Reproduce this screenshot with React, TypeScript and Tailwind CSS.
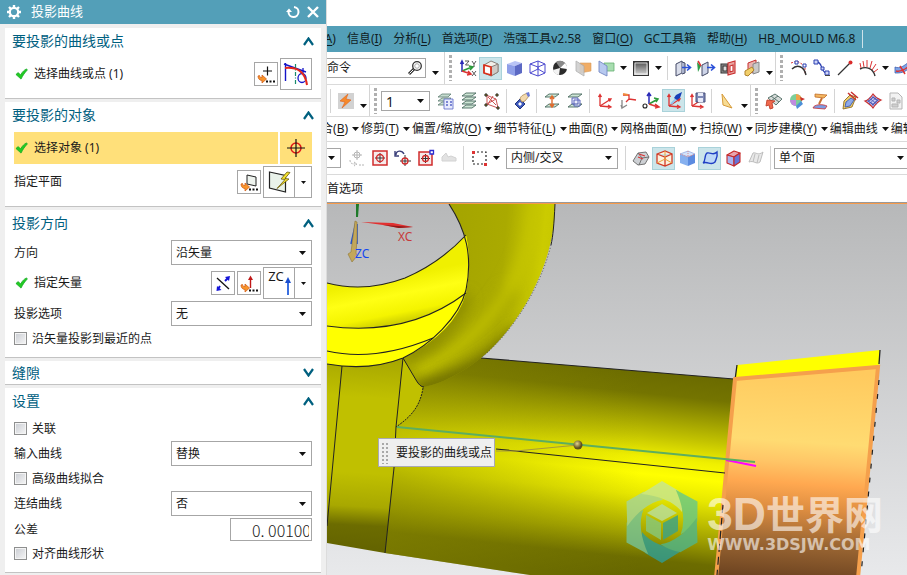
import type { ReactNode } from "react";
import clsx from "clsx";

const axes = (
  <g strokeWidth="1.3" fill="none">
    <path d="M5 15V4M3.500 6L5 3.500 6.500 6" stroke="#d33" />
    <path d="M5 15L16 8M13 8h3l-1.500 2.500" stroke="#d33" />
    <path d="M5 15l11 1M13 14l3 2-3 1.500" stroke="#d33" />
  </g>
);

const cubeLines = "M3 6l8-3 7 3v9l-7 3-8-3zM3 6l8 3 7-3M11 9v9";

// 20x20 drawings used by the toolbars
const icons: Record<string, ReactNode> = {
  csys: (
    <g fill="none" strokeWidth="1.5">
      <path d="M4 14V4M2.500 6L4 3l1.500 3" stroke="#2a2ab8" />
      <path d="M4 13l10-4M11 8l4 1-3 3" stroke="#2a9a3a" />
      <path d="M4 13l9 3M10 13l3 3-4 1" stroke="#d33" />
      <path d="M7 3h4L7.500 7H11M14 3l2 3 2-3M16 6v3M14 13l4 5M18 13l-4 5" stroke="#444" strokeWidth=".9" />
    </g>
  ),
  shadedEdges: (
    <g strokeLinejoin="round">
      <path d="M3 7l7-4 7 3v8l-7 4-7-3z" fill="#f2efe9" stroke="#8b827b" />
      <path d="M10 9l7-3v8l-7 4z" fill="#cfcac5" stroke="#8b827b" />
      <path d="M3 7l7 2v8l-7-2z" fill="#fff" stroke="#d9301c" strokeWidth="1.800" />
    </g>
  ),
  shaded: (
    <g>
      <path d="M3 6l8-3 7 2-7 3z" fill="#b9c4f6" />
      <path d="M3 6l8 2v10l-8-3z" fill="#8f9fe8" />
      <path d="M11 8l7-3v10l-7 3z" fill="#5c69c4" />
    </g>
  ),
  wire: (
    <g fill="none" stroke="#4b48cf" strokeWidth="1">
      <path d={cubeLines} />
      <path d="M11 3v8l7 4M11 11l-8 4" />
    </g>
  ),
  studio: (
    <g>
      <circle cx="10" cy="10" r="7" fill="#2c2c2c" />
      <path d="M10 10L6 4a7 7 0 0 1 9 1z" fill="#8a8a8a" />
      <path d="M10 10l-7 2a7 7 0 0 0 6 5z" fill="#f3f3f3" />
      <path d="M10 10l5-5a7 7 0 0 1 2 6z" fill="#fff" />
    </g>
  ),
  clip: (
    <g>
      <path d="M7 5h11v8l-11 2z" fill="#f0ad66" stroke="#d99b5c" strokeWidth=".6" />
      <path d="M3 3l8 5v10L3 13z" fill="#cfcfcf" stroke="#a8a8a8" strokeWidth=".8" opacity=".9" />
    </g>
  ),
  clipEdit: (
    <g>
      <path d="M8 5h10v8H9z" fill="#a8ddb0" stroke="#64b071" strokeWidth=".8" />
      <path d="M3 3l8 5v10L3 14z" fill="#b7c9ef" stroke="#7588c4" strokeWidth=".9" />
    </g>
  ),
  backdrop: (
    <g>
      <defs>
        <linearGradient id="backdrop" x1="0" y1="0" x2="0" y2="1">
          <stop stopColor="#4a4a4a" />
          <stop offset="1" stopColor="#dcdcdc" />
        </linearGradient>
      </defs>
      <rect x="2.500" y="3.500" width="15" height="14" fill="url(#backdrop)" stroke="#333" />
      <path d="M4 5h12v11H4z" fill="none" stroke="#fff" strokeWidth=".7" />
    </g>
  ),
  moveFace: (
    <g>
      <path d="M3 6l6-3v12l-6 3z" fill="#d9ddea" stroke="#444a66" />
      <path d="M9 4l3 1v10l-3 1" fill="#aab2cc" stroke="#444a66" />
      <path d="M9 9.500h8M14 6.500l3.500 3-3.500 3" fill="none" stroke="#2a50d8" strokeWidth="1.600" />
    </g>
  ),
  pullFace: (
    <g>
      <path d="M1 4l4 4-3 6z" fill="#2e9e49" />
      <path d="M2 3l3 5" stroke="#d33" strokeWidth="1.500" />
      <path d="M6 7l6-3v11l-6 3z" fill="#cdd4e8" stroke="#444a66" />
      <path d="M11 9.500h7M15 6.500l3.500 3-3.500 3" fill="none" stroke="#2a50d8" strokeWidth="1.600" />
    </g>
  ),
  offsetFace: (
    <g strokeWidth="1.100">
      <path d="M2 6h7v9H2z" fill="#999" stroke="#333" />
      <path d="M4 8h4v5H4z" fill="#ddd" stroke="#333" />
      <path d="M9 5l7-2v12l-7 2z" fill="#e9a4a0" stroke="#c92f2f" />
      <path d="M11 8l3-1v6l-3 1z" fill="#fff" stroke="#c92f2f" />
    </g>
  ),
  replaceFace: (
    <g strokeWidth="1">
      <path d="M6 5l8-3v11l-8 3z" fill="#e8b3ae" stroke="#c92f2f" />
      <path d="M11 6l6-2v10l-6 2z" fill="#c9c9c9" stroke="#888" />
      <path d="M3 13l7-4 2 3-6 6-3-1z" fill="#f2cf6a" stroke="#b0832c" />
    </g>
  ),
  spline: (
    <g fill="none">
      <path d="M2 5l6-2 8 5v8" stroke="#d33" strokeDasharray="2 1.500" />
      <path d="M3 11c5-5 12-3 14 6" stroke="#333" strokeWidth="1.400" />
      <path d="M6 3h3v3H6zM14 6h3v3h-3z" fill="#fff" stroke="#2a3fb0" />
    </g>
  ),
  bridge: (
    <g fill="none" stroke="#2a3fb0">
      <path d="M5 4c6 0 3 11 11 12" strokeWidth="1.300" />
      <path d="M2 2h4v4H2zM9 9h3v3H9zM13 13h4v4h-4z" fill="#cfd6f8" />
      <path d="M13 17.500h5" stroke="#444" />
    </g>
  ),
  line: (
    <g>
      <path d="M3 17L15 5" stroke="#333" strokeWidth="1.200" />
      <circle cx="15.500" cy="4.500" r="2" fill="#d92c2c" />
    </g>
  ),
  comb: (
    <g fill="none">
      <path d="M2 11c6-3 13-1 15 7" stroke="#333" strokeWidth="1.400" />
      <path d="M3 10L2 5M6 9L5 3M9 9V2M12 10l2-7M14 12l4-6M16 14l4-3" stroke="#d33" />
    </g>
  ),
  sheet: (
    <g>
      <path d="M2 9c5 2 9-1 15-6v6c-5 6-10 6-15 6z" fill="#7da3e8" stroke="#3f5fb0" strokeWidth=".8" />
      <path d="M3 13c5 1 9-1 14-6M7 8l5 8" stroke="#d33" fill="none" strokeWidth="1.500" />
    </g>
  ),
  bolt: (
    <g>
      <path d="M2 2h16v16H2z" fill="#d2d2d2" />
      <path d="M12 3L4 10l5 1-3 6 9-8-5-1z" fill="#f58a2c" stroke="#e0601a" strokeWidth=".6" />
    </g>
  ),
  layerSettings: (
    <g fill="#c6dccf" stroke="#5f7f74" strokeWidth=".8">
      <path d="M2 14l4-3h9l-3 3zM2 10l4-3h9l-3 3zM2 6l4-3h9l-3 3z" />
      <path d="M8 8h9v10H8z" fill="#e7ebfc" stroke="#5a67c8" />
      <path d="M10 11h2M10 14h2M14 11h2M14 14h2" stroke="#5a67c8" strokeWidth="1.500" />
    </g>
  ),
  layers: (
    <g fill="#cfe6d6" stroke="#4b6b60" strokeWidth=".9">
      <path d="M3 17l4-3h10l-4 3zM3 13l4-3h10l-4 3zM3 9l4-3h10l-4 3zM3 5l4-3h10l-4 3z" />
    </g>
  ),
  layerMove: (
    <g fill="none" strokeWidth="1">
      <path d="M4 4l10 4 2 9M5 13L14 8M5 4v9l11 4" stroke="#c55" />
      <path d="M6 6l8 8M11 5l-5 8" stroke="#c55" />
      <path d="M3 3h2v2H3zM14 3h2v2h-2zM15 16h2v2h-2zM3 13h2v2H3z" fill="#e2c32c" stroke="#222" />
    </g>
  ),
  pickLayer: (
    <g>
      <path d="M3 13l5-5 5 5-5 5z" fill="#3d59bd" stroke="#22367d" />
      <path d="M6 13l2-2 2 2-2 2z" fill="#fff" />
      <path d="M8 8c1-4 4-4 7-6l2 3-4 5-3 1z" fill="#f3d9ac" stroke="#a88650" strokeWidth=".8" />
      <path d="M14 2l3-1 1 4-2 1z" fill="#6a7bd8" />
    </g>
  ),
  planes: (
    <g fill="#cfe6d6" stroke="#4b6b60" strokeWidth=".9">
      <path d="M3 6l4-3h10l-4 3zM3 16l4-3h10l-4 3z" />
      <path d="M10 6v9M8 8l2-3 2 3M8 13l2 3 2-3" stroke="#e06a2c" fill="none" strokeWidth="1.400" />
    </g>
  ),
  planesBox: (
    <g fill="#cfe6d6" stroke="#4b6b60" strokeWidth=".9">
      <path d="M3 6l4-3h10l-4 3zM3 16l4-3h10l-4 3z" />
      <path d="M7 7h6v6H7zM9 9h6v6H9z" fill="#e3e6fa" fillOpacity=".7" stroke="#4e59b5" />
    </g>
  ),
  wcs: axes,
  wcsOrient: (
    <g fill="none" strokeWidth="1.300">
      <path d="M4 9v8l5-3M4 17l-1-3" stroke="#888" />
      <path d="M5 4h6v4M11 8l7 1M11 8l-3 3" stroke="#d33" />
      <path d="M5 3l5 1" stroke="#f08a3c" strokeWidth="2" />
    </g>
  ),
  wcsOrigin: (
    <g fill="none" strokeWidth="1.500">
      <path d="M8 13V3M6 5l2-3 2 3" stroke="#2a2ab8" />
      <path d="M8 13l9-5M13 7l4 1-2 3" stroke="#2a9a3a" />
      <path d="M8 13l9 3M14 13l4 3-4 1" stroke="#d33" />
      <circle cx="4" cy="15" r="2" stroke="#222" strokeWidth="1.100" />
    </g>
  ),
  wcsDynamic: (
    <g>
      {axes}
      <path d="M7 13L14 6" stroke="#8fc4ee" strokeWidth="1.800" />
      <path d="M10 7l2-3 6-3-2 6-3 2z" fill="#1840b8" />
    </g>
  ),
  wcsSave: (
    <g>
      {axes}
      <path d="M9 2h9v9H9z" fill="#7d88b5" stroke="#48507a" />
      <path d="M11 2h5v3h-5zM11 7h5v4h-5z" fill="#e8ebf8" />
    </g>
  ),
  triangle: <path d="M5 3l10 14-9-3z" fill="#f7dc94" stroke="#d69b3a" />,
  patch: (
    <g strokeWidth=".9">
      <path d="M4 7l7-4 7 5-6 6z" fill="#d6dbd9" stroke="#4f6b63" />
      <path d="M7 5l8 6M14 5l-7 5" stroke="#4f6b63" />
      <path d="M3 9l8 1-3 2 1 5-3 1-1-4-3 1z" fill="#f06a4e" stroke="#c2402a" />
    </g>
  ),
  palette: (
    <g>
      <circle cx="9" cy="9" r="6" fill="#7ccf9a" />
      <path d="M9 3a6 6 0 0 1 6 6H9z" fill="#f0a24a" />
      <path d="M3 9h6v6a6 6 0 0 1-6-6z" fill="#c08be0" />
      <path d="M9 15l5-5 2 3-6 5z" fill="#4d8fd9" />
      <path d="M13 6l5 2-4 2z" fill="#c9302c" />
    </g>
  ),
  sweep: (
    <g>
      <path d="M5 3l12 1-3 3-9-1z" fill="#f3b661" stroke="#c06c26" strokeWidth=".8" />
      <path d="M12 7L9 13" stroke="#c96f2f" strokeWidth="2" />
      <path d="M3 17c1-4 10-4 14-2l-2 3z" fill="#7b9ce4" stroke="#c92f2f" strokeWidth=".8" />
    </g>
  ),
  bladeSheet: (
    <g strokeWidth=".9">
      <path d="M4 10l6-6 6 2-4 10-9 2z" fill="#f2cf6a" stroke="#8f6d24" />
      <path d="M6 11l5-4 3 2-4 6-5 1z" fill="#8fa9e8" stroke="#3f5fb0" />
      <path d="M8 2l8 7M11 1l7 6" stroke="#c92f2f" strokeWidth="1.500" />
    </g>
  ),
  mesh: (
    <g fill="none" stroke="#c92f2f" strokeWidth="1.200">
      <path d="M2 10c4-1 6-4 8-7 2 3 5 5 8 6-4 2-6 5-8 8-2-3-5-5-8-7z" fill="#cdd1f6" />
      <path d="M5 10c3-1 4-2 5-4 2 2 3 3 5 3-2 2-4 3-5 5-1-2-3-3-5-4z" stroke="#4e59b5" />
      <path d="M6 7l8 6M14 6l-8 7" stroke="#4e59b5" strokeWidth=".8" />
    </g>
  ),
  report: (
    <g fill="#f2f2f2" stroke="#b5b5b5">
      <path d="M4 2h8l4 4v12H4z" />
      <path d="M6 7h3v3H6zM11 9h3v3h-3zM6 13h6v3H6z" fill="#cfcfcf" />
    </g>
  ),
  snapOff: (
    <g stroke="#b4b4b4" fill="none">
      <path d="M10 2v10M5 7h10" />
      <circle cx="10" cy="7" r="3" />
      <path d="M3 12c0 4 3 4 6 4M7 14l3 2-3 2M12 17h6" strokeDasharray="2 1" />
    </g>
  ),
  target: (
    <g fill="none">
      <path d="M3 3h14v14H3z" fill="#f6eaea" stroke="#d12c2c" strokeWidth="1.500" />
      <path d="M10 5v10M5 10h10" stroke="#333" />
      <circle cx="10" cy="10" r="3.500" stroke="#d12c2c" strokeWidth="1.300" />
    </g>
  ),
  rotateTarget: (
    <g fill="none">
      <path d="M3 7c0-5 6-5 8-1M2 3v5h4" stroke="#3a3f7a" strokeWidth="1.400" />
      <path d="M12 7v11M7 13h11" stroke="#333" />
      <circle cx="12" cy="13" r="3" stroke="#d12c2c" strokeWidth="1.300" />
    </g>
  ),
  targetBox: (
    <g fill="none">
      <path d="M3 4h13v13H3z" fill="#f6eaea" stroke="#d12c2c" strokeWidth="1.500" />
      <path d="M9.500 6v9M5 10.500h9" stroke="#333" />
      <circle cx="9.500" cy="10.500" r="3" stroke="#d12c2c" strokeWidth="1.300" />
      <path d="M14 2.500h3.500V6H14z" fill="#fff" stroke="#2a2ad0" strokeWidth="1.300" />
    </g>
  ),
  cloud: <path d="M3 9l4-4 2 4 3-1 5 2v3H3z" fill="#e2e2e2" stroke="#d2d2d2" />,
  marquee: (
    <g fill="none">
      <path d="M4 4h13v12H4z" stroke="#222" strokeWidth="1.200" strokeDasharray="2 2" />
      <path d="M3 3h3v3H3zM15 15h3v3h-3z" fill="#d33" />
    </g>
  ),
  bodyGrey: (
    <g stroke="#666" strokeWidth=".9">
      <path d="M2 13l5-8 8-1 3 5-4 7-7 1z" fill="#cdd0d4" />
      <path d="M7 5l4 5-3 7M11 10l7-1" fill="none" />
      <path d="M8 6l6 2M7 9l5 2" stroke="#d33" strokeWidth="1.200" />
    </g>
  ),
  bodyEdges: (
    <g fill="none">
      <path d={cubeLines} fill="#fbf1df" stroke="#d23a24" strokeWidth="1.300" />
      <path d="M11 3v8l7 4M11 11l-8 4" stroke="#e9a23c" />
    </g>
  ),
  bodyBlue: (
    <g>
      <path d="M3 6l8-3 7 3-7 3z" fill="#d5e3fa" stroke="#8aa5df" strokeWidth=".7" />
      <path d="M3 6l8 3v9l-8-3z" fill="#86b0ef" />
      <path d="M11 9l7-3v9l-7 3z" fill="#5b8be0" />
      <path d="M11 3v6M3 6l8 3 7-3" stroke="#d88" fill="none" strokeDasharray="1 1" />
    </g>
  ),
  surface: (
    <path d="M3 15c3-2 1-8 4-10 4-1 6 3 10-1 1 5-1 7-2 10-4 4-7-1-12 1z" fill="#bcd8f8" stroke="#1f3fc4" strokeWidth="1.400" />
  ),
  bodyRed: (
    <g stroke="#c62828" strokeWidth="1.100" strokeLinejoin="round">
      <path d="M4 7l7-4 6 2-6 4z" fill="#e8a5ae" />
      <path d="M4 7l7 2v9l-7-3z" fill="#a9b4f0" />
      <path d="M11 9l6-4v9l-6 4z" fill="#6674d8" />
    </g>
  ),
  surfaceGrey: <path d="M3 14l4-9c3-1 5 3 10-1l-3 10c-4 3-6-2-11 0zM9 6l-2 8M13 7l-2 8" fill="#e8e8e8" stroke="#bdbdbd" />,
};

const Caret = () => (
  <svg viewBox="0 0 7 4" className="h-1 w-[7px] shrink-0">
    <path d="M0 0h7L3.500 4z" fill="#111" />
  </svg>
);

const Tool = ({ name, active }: { name: string; active?: boolean }) => (
  <button
    type="button"
    aria-label={name}
    className={clsx("flex h-[23px] w-[23px] shrink-0 items-center justify-center border", active ? "border-[#a9d2da] bg-[#cbe5ea]" : "border-transparent")}
  >
    <svg viewBox="0 0 20 20" className="size-5 shrink-0">{icons[name]}</svg>
  </button>
);

const Tools = ({ names, active = [] }: { names: string[]; active?: string[] }) => (
  <>
    {names.map((name) => (
      <Tool key={name} name={name} active={active.includes(name)} />
    ))}
  </>
);

const More = ({ low }: { low?: boolean }) => (
  <button type="button" aria-label="more" className={clsx("flex h-full w-3 shrink-0 items-center justify-center", low && "pt-2.5")}>
    <Caret />
  </button>
);

const Divider = () => <div className="mx-[3px] h-6 w-px shrink-0 bg-[#d4d4d4]" />;

const Grip = () => (
  <div className="flex h-full shrink-0 items-center border-l border-[#d4d4d4] px-1">
    <div className="h-[26px] w-[3px] bg-[repeating-linear-gradient(to_bottom,#b0b0b0_0_3px,#fff_3px_5px)]" />
  </div>
);

const Dropdown = ({ label, value, className }: { label: string; value: string; className?: string }) => (
  <div className={clsx("relative shrink-0 border border-[#a6a6a6] bg-white", className)}>
    <select aria-label={label} defaultValue={value} className="h-full w-full appearance-none bg-transparent pl-1 outline-none">
      <option>{value}</option>
    </select>
    <div className="pointer-events-none absolute inset-y-0 right-[5px] flex items-center">
      <Caret />
    </div>
  </div>
);

const Row = ({ children, className }: { children: ReactNode; className?: string }) => (
  <div className={clsx("flex shrink-0 items-center overflow-hidden border-b border-[#dadada] whitespace-nowrap", className)}>{children}</div>
);

const MenuLabel = ({ text, hotkey }: { text: string; hotkey?: string }) => (
  <>
    {text}
    {hotkey && (
      <>
        (<u className="underline-offset-2">{hotkey}</u>)
      </>
    )}
  </>
);

const menus = [
  { text: "", hotkey: "A" },
  { text: "信息", hotkey: "I" },
  { text: "分析", hotkey: "L" },
  { text: "首选项", hotkey: "P" },
  { text: "浩强工具v2.58" },
  { text: "窗口", hotkey: "O" },
  { text: "GC工具箱" },
  { text: "帮助", hotkey: "H" },
  { text: "HB_MOULD M6.8" },
];

const commands = [
  { text: "合", hotkey: "B" },
  { text: "修剪", hotkey: "T" },
  { text: "偏置/缩放", hotkey: "O" },
  { text: "细节特征", hotkey: "L" },
  { text: "曲面", hotkey: "R" },
  { text: "网格曲面", hotkey: "M" },
  { text: "扫掠", hotkey: "W" },
  { text: "同步建模", hotkey: "Y" },
  { text: "编辑曲线" },
  { text: "编辑曲面" },
];

const Section = ({ title, children }: { title: string; children?: ReactNode }) => (
  <section className="mb-[3px] border-b border-[#c3c3c3] bg-white last:mb-0">
    <button type="button" className={clsx("flex w-full items-center justify-between px-[7px] text-sm text-[#00607f]", children ? "h-[26px]" : "h-[23px]")}>
      {title}
      <svg viewBox="0 0 11 9" className="h-[9px] w-[11px]">
        <path d={children ? "M1 8l4.500-6.500L10 8" : "M1 1l4.500 6.500L10 1"} fill="none" stroke="#00607f" strokeWidth="2.200" />
      </svg>
    </button>
    {children && <div className="flex flex-col gap-0.5 px-[9px] pt-1 pb-2">{children}</div>}
  </section>
);

const Tick = () => (
  <svg viewBox="0 0 14 12" className="mr-1.5 ml-px h-3 w-[13px]">
    <path d="M1 6.500L3.500 4.500 6 7C8 3.500 10 1.500 12.500.5l.8 1.200C10.500 4.500 8.500 7.500 6.500 11.500z" fill="#22cc22" stroke="#12a622" strokeWidth=".8" />
  </svg>
);

const Square = ({ label, small, children }: { label: string; small?: boolean; children: ReactNode }) => (
  <button type="button" aria-label={label} className={clsx("flex shrink-0 items-center justify-center border border-[#a6a6a6] bg-white", small ? "size-6" : "size-8")}>
    {children}
  </button>
);

const SplitSquare = ({ label, children }: { label: string; children: ReactNode }) => (
  <div className="flex">
    <Square label={label}>{children}</Square>
    <button type="button" aria-label={`${label} ▾`} className="-ml-px flex h-8 w-[18px] items-center justify-center border border-[#a6a6a6]">
      <svg viewBox="0 0 5 3" className="h-[3px] w-[5px]">
        <path d="M0 0h5L2.500 3z" fill="#111" />
      </svg>
    </button>
  </div>
);

const Field = ({ label, value }: { label: string; value: string }) => (
  <div className="flex items-center justify-between">
    <span>{label}</span>
    <Dropdown label={label} value={value} className="h-[25px] w-[141px]" />
  </div>
);

const Check = ({ label }: { label: string }) => (
  <label className="flex h-[21px] items-center gap-[5px]">
    <input
      type="checkbox"
      className="size-[13px] appearance-none border border-[#8e8f8f] bg-linear-to-br from-[#c9ccd2] to-[#f6f6f6] shadow-[inset_0_0_0_1px_#f4f4f4] checked:bg-[#3a8fb0]"
    />
    {label}
  </label>
);

const BentArrow = () => (
  <path d="M3 13c0 3 2 4.500 4 4.500v2.500l4.500-4L7 12v2.500c-1.500 0-2.500-.5-2.500-2z" fill="#f7942a" stroke="#d4611a" strokeWidth=".8" />
);

const Dots = () => <path d="M11 17.500h2v2h-2zM14.500 17.500h2v2h-2zM18 17.500h2v2h-2z" fill="#111" />;

const DialogPanel = () => (
  <aside className="flex w-[327px] shrink-0 flex-col border-r border-[#dcdcdc] bg-[#efefef]">
    <header className="flex h-6 items-center bg-[#539fb8] px-1.5 text-[13px] text-white">
      <svg viewBox="0 0 16 16" className="mr-[9px] size-4">
        <circle cx="8" cy="8" r="4.200" fill="none" stroke="#fff" strokeWidth="2.200" />
        <path d="M8 1v2.500M8 12.500V15M1 8h2.500M12.500 8H15M3 3l2 2M11 11l2 2M13 3l-2 2M5 11l-2 2" stroke="#fff" strokeWidth="2.400" />
      </svg>
      <h1 className="grow">投影曲线</h1>
      <button type="button" aria-label="重置" className="mr-1.5">
        <svg viewBox="0 0 14 14" className="size-3.5">
          <path d="M8 2a5 5 0 1 1-5.500 5" fill="none" stroke="#fff" strokeWidth="2" />
          <path d="M0 7l3-3.500L6 7z" fill="#fff" />
        </svg>
      </button>
      <button type="button" aria-label="关闭">
        <svg viewBox="0 0 14 14" className="size-3.5">
          <path d="M2 2l10 10M12 2L2 12" stroke="#fff" strokeWidth="2.400" />
        </svg>
      </button>
    </header>

    <div className="grow px-[5px] pt-1">
      <Section title="要投影的曲线或点">
        <div className="flex items-center">
          <Tick />
          <span className="grow">选择曲线或点 (1)</span>
          <div className="flex items-center gap-0.5">
            <Square small label="点">
              <svg viewBox="0 0 22 22" className="size-[22px]">
                <path d="M12.500 3.500v9M8 8h9" stroke="#111" strokeWidth="1.200" />
                <BentArrow />
                <Dots />
              </svg>
            </Square>
            <Square label="曲线">
              <svg viewBox="0 0 30 30" className="size-[30px]" fill="none">
                <path d="M4.500 4v18M3 5l22 8" stroke="#1414c8" strokeWidth="1.400" />
                <path d="M14.500 5v21" stroke="#188a6a" strokeWidth="1.200" strokeDasharray="4 1.500 1 1.500" />
                <ellipse cx="21" cy="19" rx="4" ry="4.500" stroke="#1414c8" strokeWidth="1.300" />
                <path d="M22 9v5" stroke="#1414c8" strokeWidth="1.300" />
                <path d="M4 9c12-1 20 3 22 17" stroke="#e3261a" strokeWidth="2" />
              </svg>
            </Square>
          </div>
        </div>
      </Section>

      <Section title="要投影的对象">
        <div className="flex h-8 gap-0.5">
          <div className="flex grow items-center bg-[#ffe07a]">
            <Tick />
            选择对象 (1)
          </div>
          <button type="button" aria-label="选择对象" className="flex w-8 items-center justify-center bg-[#ffe07a]">
            <svg viewBox="0 0 20 20" className="size-5" fill="none">
              <circle cx="10" cy="10" r="5" stroke="#e01818" strokeWidth="1.500" />
              <path d="M10 1v18M1 10h18" stroke="#111" strokeWidth="1.200" />
            </svg>
          </button>
        </div>
        <div className="flex items-center">
          <span className="grow">指定平面</span>
          <div className="flex items-center gap-0.5">
            <Square small label="平面对话框">
              <svg viewBox="0 0 22 22" className="size-[22px]">
                <path d="M9 4l9 2v9l-9-2z" fill="#eef3ee" stroke="#222" />
                <BentArrow />
                <Dots />
              </svg>
            </Square>
            <SplitSquare label="指定平面">
              <svg viewBox="0 0 30 30" className="size-[30px]">
                <path d="M5.500 5l16 3.500V25l-16-4z" fill="#e9f2ea" stroke="#222" strokeWidth="1.200" />
                <path d="M23 5l-6 7 4 .5-8 9 12-9.500-4-.5 5-6z" fill="#f5e22c" stroke="#6b5c10" strokeWidth=".8" />
              </svg>
            </SplitSquare>
          </div>
        </div>
      </Section>

      <Section title="投影方向">
        <Field label="方向" value="沿矢量" />
        <div className="flex items-center">
          <Tick />
          <span className="grow">指定矢量</span>
          <div className="flex items-center gap-0.5">
            <Square small label="反向">
              <svg viewBox="0 0 22 22" className="size-[22px]">
                <path d="M5 6l12 11" stroke="#111" strokeWidth="1.300" />
                <path d="M13 9l3-3M8 14l-2 3" stroke="#1414d8" strokeWidth="2" />
                <path d="M13 5l5-1-1 5zM5 14l-.500 5L9.500 18z" fill="#1414d8" />
              </svg>
            </Square>
            <Square small label="矢量对话框">
              <svg viewBox="0 0 22 22" className="size-[22px]">
                <path d="M12.500 16V7" stroke="#c01818" strokeWidth="1.400" />
                <path d="M10 8l2.500-4.500L15 8z" fill="#c01818" />
                <BentArrow />
                <Dots />
              </svg>
            </Square>
            <SplitSquare label="指定矢量">
              <span className="self-start pt-0.5 pl-0.5 text-[13px] leading-3">ZC</span>
              <svg viewBox="0 0 8 22" className="mt-1.5 h-[22px] w-2 shrink-0">
                <path d="M4 20V6" stroke="#3a6fe0" strokeWidth="2" />
                <path d="M1 8l3-6 3 6z" fill="#1a4fd0" />
              </svg>
            </SplitSquare>
          </div>
        </div>
        <Field label="投影选项" value="无" />
        <Check label="沿矢量投影到最近的点" />
      </Section>

      <Section title="缝隙" />

      <Section title="设置">
        <Check label="关联" />
        <Field label="输入曲线" value="替换" />
        <Check label="高级曲线拟合" />
        <Field label="连结曲线" value="否" />
        <label className="flex items-center justify-between">
          公差
          <input
            type="text"
            defaultValue="0. 00100"
            className="h-[23px] w-[82px] border border-[#a6a6a6] bg-white pr-0.5 pl-[21px] font-['Noto_Sans_CJK_SC',sans-serif] text-base font-light outline-none"
          />
        </label>
        <Check label="对齐曲线形状" />
      </Section>
    </div>
  </aside>
);

const Toolbars = () => (
  <>
    <nav className="flex h-[26px] shrink-0 items-center gap-[11px] overflow-hidden bg-[#539fb8] whitespace-nowrap text-[#101c22]">
      {menus.map((menu, index) => (
        <button key={menu.text} type="button" className={clsx("shrink-0", index === 0 && "-ml-1.5")}>
          <MenuLabel {...menu} />
        </button>
      ))}
      <div className="-ml-1 h-[18px] w-px shrink-0 bg-[#cfe3ea]" />
    </nav>

    <Row className="h-[33px]">
      <div className="flex h-5 w-[99px] shrink-0 items-center border border-l-0 border-[#a6a6a6]">
        <input type="text" aria-label="查找命令" defaultValue="命令" className="w-0 grow outline-none" />
        <svg viewBox="0 0 16 16" className="mr-0.5 size-4" fill="none">
          <path d="M7 9l-5 5" stroke="#333" strokeWidth="3" />
          <path d="M6.500 9.500L2.500 13.500" stroke="#fff" />
          <circle cx="10" cy="6" r="4.300" fill="#fff" stroke="#333" strokeWidth="1.300" />
          <circle cx="10" cy="6" r="2.300" stroke="#999" strokeWidth=".8" />
        </svg>
      </div>
      <div className="flex h-full w-[18px] shrink-0 justify-center">
        <More low />
      </div>
      <Grip />
      <Tools names={["csys", "shadedEdges", "shaded", "wire", "studio", "clip", "clipEdit"]} active={["shadedEdges"]} />
      <More />
      <Tool name="backdrop" />
      <More />
      <Divider />
      <Tools names={["moveFace", "pullFace", "offsetFace", "replaceFace"]} />
      <More low />
      <Grip />
      <Tools names={["spline", "bridge", "line", "comb"]} />
      <More />
      <Tool name="sheet" />
    </Row>

    <Row className="h-8">
      <Divider />
      <Tool name="bolt" />
      <More low />
      <Grip />
      <Dropdown label="工作图层" value="1" className="mr-1 h-5 w-[49px] text-sm" />
      <Tools names={["layerSettings", "layers", "layerMove"]} />
      <Divider />
      <Tool name="pickLayer" />
      <Divider />
      <Tools names={["planes", "planesBox"]} />
      <Divider />
      <Tools names={["wcs", "wcsOrient", "wcsOrigin", "wcsDynamic", "wcsSave"]} active={["wcsDynamic"]} />
      <Divider />
      <Tool name="triangle" />
      <More low />
      <Grip />
      <Tools names={["patch", "palette", "sweep"]} />
      <Divider />
      <Tools names={["bladeSheet", "mesh", "report"]} />
      <More low />
    </Row>

    <Row className="h-[25px] gap-0.5">
      {commands.map((command, index) => (
        <button key={command.text} type="button" className={clsx("flex shrink-0 items-center gap-1", index === 0 && "-ml-1.5")}>
          <span>
            <MenuLabel {...command} />
          </span>
          <Caret />
        </button>
      ))}
    </Row>

    <Row className="h-[33px]">
      <Dropdown label="过滤器" value="" className="mr-1 h-5 w-3.5 border-l-0" />
      <Tools names={["snapOff", "target", "rotateTarget", "targetBox", "cloud"]} />
      <Divider />
      <Tool name="marquee" />
      <More />
      <Dropdown label="选择方式" value="内侧/交叉" className="mx-1 h-[21px] w-28" />
      <Divider />
      <Tools names={["bodyGrey", "bodyEdges", "bodyBlue", "surface", "bodyRed", "surfaceGrey"]} active={["bodyEdges", "surface"]} />
      <Divider />
      <Dropdown label="面规则" value="单个面" className="h-[21px] w-[136px]" />
    </Row>

    <div className="flex h-7 shrink-0 items-center border-b border-[#999]">首选项</div>
  </>
);

const Scene = () => (
  <svg viewBox="327 204 580 371" preserveAspectRatio="xMinYMin slice" className="absolute inset-0 h-full w-full">
    <defs>
      <linearGradient id="sky" x1="0" y1="0" x2="0" y2="1">
        <stop stopColor="#b7b8b9" />
        <stop offset="1" stopColor="#e8e9eb" />
      </linearGradient>
      <linearGradient id="pipe" gradientUnits="userSpaceOnUse" x1="620" y1="365" x2="598" y2="575">
        <stop stopColor="#6a6a00" />
        <stop offset=".12" stopColor="#747400" />
        <stop offset=".32" stopColor="#c4c400" />
        <stop offset=".42" stopColor="#f0f000" />
        <stop offset=".5" stopColor="#ffff00" />
        <stop offset=".6" stopColor="#e8e800" />
        <stop offset=".78" stopColor="#a2a200" />
        <stop offset=".9" stopColor="#6c6c00" />
        <stop offset="1" stopColor="#656500" />
      </linearGradient>
      <linearGradient id="pipeShade" gradientUnits="userSpaceOnUse" x1="390" y1="0" x2="640" y2="0">
        <stop stopColor="#8a8a00" stopOpacity=".5" />
        <stop offset="1" stopColor="#8a8a00" stopOpacity="0" />
      </linearGradient>
      <linearGradient id="boss" gradientUnits="userSpaceOnUse" x1="370" y1="360" x2="360" y2="548">
        <stop stopColor="#a8a800" />
        <stop offset=".2" stopColor="#c0c000" />
        <stop offset=".6" stopColor="#c0c000" />
        <stop offset=".78" stopColor="#a8a800" />
        <stop offset=".88" stopColor="#6c6c00" />
        <stop offset="1" stopColor="#646400" />
      </linearGradient>
      <linearGradient id="arm" gradientUnits="userSpaceOnUse" x1="450" y1="230" x2="560" y2="240">
        <stop stopColor="#a4a400" />
        <stop offset=".5" stopColor="#aaaa00" />
        <stop offset=".85" stopColor="#cccc00" />
        <stop offset="1" stopColor="#c4c400" />
      </linearGradient>
      <linearGradient id="bowl" gradientUnits="userSpaceOnUse" x1="380" y1="280" x2="390" y2="330">
        <stop stopColor="#f0f000" />
        <stop offset=".35" stopColor="#ffff14" />
        <stop offset=".7" stopColor="#f4f400" />
        <stop offset="1" stopColor="#bcbc00" />
      </linearGradient>
      <linearGradient id="face" gradientUnits="userSpaceOnUse" x1="800" y1="370" x2="786" y2="580">
        <stop stopColor="#ffca5e" />
        <stop offset=".34" stopColor="#ffdb72" />
        <stop offset=".44" stopColor="#ffc566" />
        <stop offset=".54" stopColor="#ffa850" />
        <stop offset=".66" stopColor="#dd8d41" />
        <stop offset=".82" stopColor="#9c6733" />
        <stop offset="1" stopColor="#6b4220" />
      </linearGradient>
      <radialGradient id="ball" cx=".4" cy=".35">
        <stop stopColor="#e6d68e" />
        <stop offset="1" stopColor="#5e4f1e" />
      </radialGradient>
      <filter id="soft" x="-30%" y="-30%" width="160%" height="160%">
        <feGaussianBlur stdDeviation="7" />
      </filter>
      <clipPath id="armClip">
        <path d="M449 204C466 230 473 256 466 290 459 318 430 345 403 358L416 380Q420 387 424 387 450 382 481 358C520 326 556 262 555 204z" />
      </clipPath>
    </defs>

    <path d="M327 204h580v371H327z" fill="url(#sky)" />

    <path d="M385 355L481 358 734 379 716 575H530L385 553z" fill="url(#pipe)" />
    <path d="M385 355L481 358 734 379 716 575H530L385 553z" fill="url(#pipeShade)" />
    <path d="M481 358L734 379" stroke="#222" strokeWidth="1.200" />
    <path d="M327 360L403 356 397 427 385 553 327 543z" fill="url(#boss)" />
    <path d="M403 358L418 382 423 388C420 406 412 416 396 427z" fill="#c0c000" />
    <path d="M423 388C420 406 412 416 396 427" fill="none" stroke="#222" strokeDasharray="2 1" />
    <path d="M342 366L327 526M403 358L396 427 394 468 385 553" fill="none" stroke="#222" />

    <g clipPath="url(#armClip)">
      <path d="M400 204h160v190H400z" fill="url(#arm)" />
      <path d="M510 290C490 320 460 345 430 358" fill="none" stroke="#979700" strokeWidth="14" filter="url(#soft)" />
      <path d="M535 204C534 270 490 335 415 374" fill="none" stroke="#c6c600" strokeWidth="12" filter="url(#soft)" />
      <path d="M520 330C490 362 465 376 415 390" fill="none" stroke="#606000" strokeWidth="12" filter="url(#soft)" />
      <path d="M466 295C455 325 430 345 405 358" fill="none" stroke="#828200" strokeWidth="9" filter="url(#soft)" />
    </g>
    <path d="M403 358L416 380Q420 387 424 387" fill="none" stroke="#222" />
    <path d="M555 204C554 225 553 236 551 245" fill="none" stroke="#222" />
    <path d="M551 245C540 290 510 335 481 358" fill="none" stroke="#444" strokeWidth=".8" strokeDasharray="1 2" />

    <path d="M327 283Q365 293 405 278 440 263 466 235 472 262 466 293 455 333 403 358 370 371 327 364z" fill="#ffff00" />
    <path d="M327 283Q365 293 405 278 440 263 466 235 472 262 466 293 410 336 327 326z" fill="url(#bowl)" />
    <g fill="none" stroke="#222" strokeWidth="1.100">
      <path d="M327 283Q365 293 405 278 440 263 466 235" />
      <path d="M327 326Q408 337 466 293" />
      <path d="M327 351Q375 362 433 338" />
      <path d="M449 204C466 230 473 256 466 290 459 318 430 345 403 358 378 368 350 368 327 364" />
    </g>

    <path d="M737 365L880 350 879 367 735 380z" fill="#ffff00" />
    <path d="M737 365L735 380M880 350L879 364" stroke="#222" strokeWidth="1.300" />
    <path d="M735 379L878 367 858 578H716z" fill="url(#face)" stroke="#f5a04c" strokeWidth="4" />
    <path d="M879 380L861 575" stroke="#222" strokeWidth="1.200" strokeDasharray="5 9" />
    <path d="M723 505L717 575" stroke="#222" strokeWidth="1.200" strokeDasharray="8 5" />

    <path d="M496 449L725 473" stroke="#222" strokeWidth="1.200" />
    <path d="M496 451H516L578 445" fill="none" stroke="#a59a3c" strokeWidth="1.200" />
    <path d="M726 460L756 466" stroke="#f0f" strokeWidth="2" />
    <path d="M397 427L755 462" stroke="#5dae5f" strokeWidth="2" />
    <circle cx="578" cy="445" r="4.500" fill="url(#ball)" />

    <path d="M356 204h3l-1 13h-2z" fill="#1f7a2a" />
    <path d="M356 222L351 244M357 224v20" stroke="#1f4fd0" strokeWidth="1.600" />
    <path d="M355 221l2 1 0 18-1 13 1 3-5 6-4-8 3-2z" fill="#c3a75a" stroke="#8f7736" strokeWidth=".6" />
    <path d="M361 222l32 1 20 4-14 1-16-3z" fill="#e23030" />
    <path d="M383 225l16 3 14-1z" fill="#8e1a1a" />
    <text x="355" y="258" fill="#1346f0" fontSize="12">ZC</text>
    <text x="398" y="241" fill="#c73a3a" fontSize="12">XC</text>
  </svg>
);

// blades of the logo, clockwise from the bottom one
const bladeColors = ["#2f9f97", "#74c39a", "#a5d69a", "#c6e695", "#66c98a", "#4fb68c"];

const Watermark = () => (
  <div className="absolute right-6 bottom-3 flex items-center gap-[9px] text-white/60">
    <svg viewBox="0 0 72 82" className="h-[82px] w-[72px] opacity-80">
      {bladeColors.map((color, index) => (
        <path key={color} d="M16 51Q28 66 57 69L36 82 19 72Q15 62 16 51z" fill={color} transform={`rotate(${index * 60} 36 41)`} />
      ))}
      <path d="M21 32L36 23 51 32 36 40z" fill="#b8dfa0" />
      <path d="M20 34L35 42V59L20 50z" fill="#86c87e" />
      <path d="M52 34L37 42V59L52 50z" fill="#3aa38a" />
    </svg>
    <div>
      <p className="flex items-center font-bold">
        <span className="font-['Liberation_Sans',sans-serif] text-[46px] leading-[46px]">3D</span>
        <span className="text-[39px] leading-[46px]">世界网</span>
      </p>
      <p className="font-['DejaVu_Sans',sans-serif] text-base leading-4 font-bold">WWW.3DSJW.COM</p>
    </div>
  </div>
);

export default function App() {
  return (
    <div className="flex min-h-screen overflow-hidden bg-white font-['Noto_Sans','Noto_Sans_CJK_SC',sans-serif] text-xs text-[#1a1a1a]">
      <DialogPanel />
      <main className="flex min-w-0 grow flex-col pt-[26px]">
        <Toolbars />
        <div className="relative grow overflow-hidden border-t border-[#f79a4a]">
          <Scene />
          <Watermark />
          <div className="absolute top-[234px] left-[51px] flex h-[29px] items-center gap-2 border border-[#a9a9b4] bg-[#efefef] px-0.5 whitespace-nowrap">
            <div className="h-[22px] w-[7px] bg-[radial-gradient(circle,#a8a8a8_1px,transparent_1px)] bg-size-[4px_4px]" />
            要投影的曲线或点
          </div>
        </div>
      </main>
    </div>
  );
}
